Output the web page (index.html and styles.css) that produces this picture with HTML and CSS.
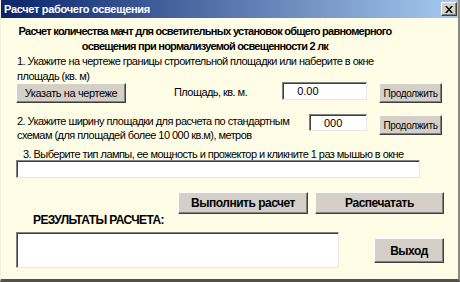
FILE: index.html
```html
<!DOCTYPE html>
<html lang="ru">
<head>
    <meta charset="UTF-8">
    <title>Расчет рабочего освещения</title>
    <link rel="stylesheet" href="styles.css">
</head>
<body>
    <div class="window">
        <div class="titlebar">
            <span class="title">Расчет рабочего освещения</span>
            <button class="close-btn" aria-label="Закрыть">
                <svg width="8" height="7" viewBox="0 0 8 7">
                    <path d="M0 0h2l2 2.5L6 0h2L5 3.5 8 7H6L4 4.5 2 7H0l3-3.5z" fill="#000"/>
                </svg>
            </button>
        </div>

        <div class="content">
            <h1 class="heading">Расчет количества мачт для осветительных установок общего равномерного<br>освещения при нормализуемой освещенности 2 лк</h1>

            <p class="step step-1">1. Укажите на чертеже границы строительной площадки или наберите в окне<br>площадь (кв. м)</p>

            <div class="row row-area">
                <button class="btn btn-draw">Указать на чертеже</button>
                <span class="area-label">Площадь, кв. м.</span>
                <input type="text" class="field field-area" value="0.00">
                <button class="btn btn-small">Продолжить</button>
            </div>

            <div class="row row-width">
                <p class="step step-2">2. Укажите ширину площадки для расчета по стандартным<br>схемам (для площадей более 10 000 кв.м), метров</p>
                <input type="text" class="field field-width" value="000">
                <button class="btn btn-small">Продолжить</button>
            </div>

            <p class="step step-3">3. Выберите тип лампы, ее мощность и прожектор и кликните 1 раз мышью в окне</p>
            <input type="text" class="field field-lamp">

            <div class="row row-actions">
                <button class="btn btn-bold btn-calc">Выполнить расчет</button>
                <button class="btn btn-bold btn-print">Распечатать</button>
            </div>

            <div class="results-label">РЕЗУЛЬТАТЫ РАСЧЕТА:</div>

            <div class="row row-results">
                <div class="results-box"></div>
                <button class="btn btn-bold btn-exit">Выход</button>
            </div>
        </div>
    </div>
</body>
</html>
```

FILE: styles.css
```css
:root {
    --face: #d4d0c8;
    --shadow: #808080;
    --dark: #404040;
    --bg: #fffde6;
    --text: #000;
}

* {
    margin: 0;
    padding: 0;
    box-sizing: border-box;
}

body {
    font-family: "Liberation Sans", Arial, sans-serif;
    font-size: 11px;
    letter-spacing: -0.55px;
    color: var(--text);
    background: var(--bg);
}

.window {
    width: 460px;
    height: 282px;
    background: var(--bg);
    border-left: 1px solid #f4f2dc;
    border-right: 2px solid #8a8a80;
    border-bottom: 3px solid #505050;
    overflow: hidden;
}

.titlebar {
    height: 18px;
    display: flex;
    align-items: center;
    justify-content: space-between;
    padding: 0 1px 0 3px;
    background: linear-gradient(to right, #0a246a, #a6caf0);
}

.title {
    color: #fff;
    font-weight: bold;
    font-size: 11px;
    letter-spacing: -0.3px;
}

.close-btn {
    width: 16px;
    height: 14px;
    display: flex;
    align-items: center;
    justify-content: center;
    background: var(--face);
    border: 1px solid;
    border-color: #fff var(--dark) var(--dark) #fff;
    box-shadow: inset -1px -1px 0 var(--shadow);
}

.content {
    padding: 0 15px;
}

.heading {
    margin-top: 6px;
    font-size: 11px;
    font-weight: bold;
    letter-spacing: -0.75px;
    line-height: 15px;
    text-align: center;
    white-space: nowrap;
    width: 378px;
}

.step {
    line-height: 15px;
    white-space: nowrap;
}

.step-1 {
    margin-top: 0;
    padding-left: 1px;
}

.row {
    display: flex;
    align-items: flex-start;
}

.row > * {
    flex-shrink: 0;
}

.btn {
    font-family: "Liberation Sans", Arial, sans-serif;
    font-size: 11px;
    letter-spacing: -0.4px;
    color: #000;
    background: var(--face);
    border: 1px solid;
    border-color: #fff var(--dark) var(--dark) #fff;
    box-shadow: inset -1px -1px 0 var(--shadow);
}

.btn-bold {
    font-weight: bold;
    font-size: 12px;
    letter-spacing: -0.5px;
}

.btn-small {
    width: 63px;
    height: 20px;
    font-size: 10px;
    letter-spacing: -0.3px;
}

.field {
    height: 18px;
    background: #fff;
    border: 1px solid;
    border-color: var(--shadow) #e8e8e0 #e8e8e0 var(--shadow);
    box-shadow: inset 1px 1px 0 var(--dark);
    font-family: "Liberation Sans", Arial, sans-serif;
    font-size: 11px;
    padding-left: 14px;
    outline: none;
}

.row-area {
    margin-top: -1px;
}

.btn-draw {
    width: 110px;
    height: 20px;
}

.area-label {
    margin-left: 48px;
    margin-top: 3px;
    white-space: nowrap;
}

.field-area {
    width: 85px;
    margin-left: 35px;
    margin-top: -1px;
}

.row-area .btn-small {
    margin-left: 12px;
}

.row-width {
    margin-top: 11px;
}

.step-2 {
    width: 293px;
    padding-left: 1px;
    line-height: 14px;
}

.field-width {
    width: 58px;
    height: 17px;
    margin-top: 0;
}

.row-width .btn-small {
    margin-left: 12px;
    margin-top: 1px;
}

.step-3 {
    margin-top: 6px;
    padding-left: 7px;
    line-height: 12px;
}

.field-lamp {
    display: block;
    width: 404px;
    margin-top: 0;
}

.row-actions {
    margin-top: 14px;
    padding-left: 162px;
    gap: 7px;
}

.row-actions .btn {
    height: 22px;
}

.btn-calc {
    width: 130px;
}

.btn-print {
    width: 129px;
}

.results-label {
    font-weight: bold;
    font-size: 12px;
    letter-spacing: -0.6px;
    line-height: 12px;
    padding-left: 17px;
}

.row-results {
    margin-top: 6px;
}

.results-box {
    width: 323px;
    height: 36px;
    background: #fff;
    border: 1px solid;
    border-color: var(--shadow) #e8e8e0 #e8e8e0 var(--shadow);
    box-shadow: inset 1px 1px 0 var(--dark);
}

.btn-exit {
    width: 70px;
    height: 25px;
    margin-left: 35px;
    margin-top: 6px;
}
```
